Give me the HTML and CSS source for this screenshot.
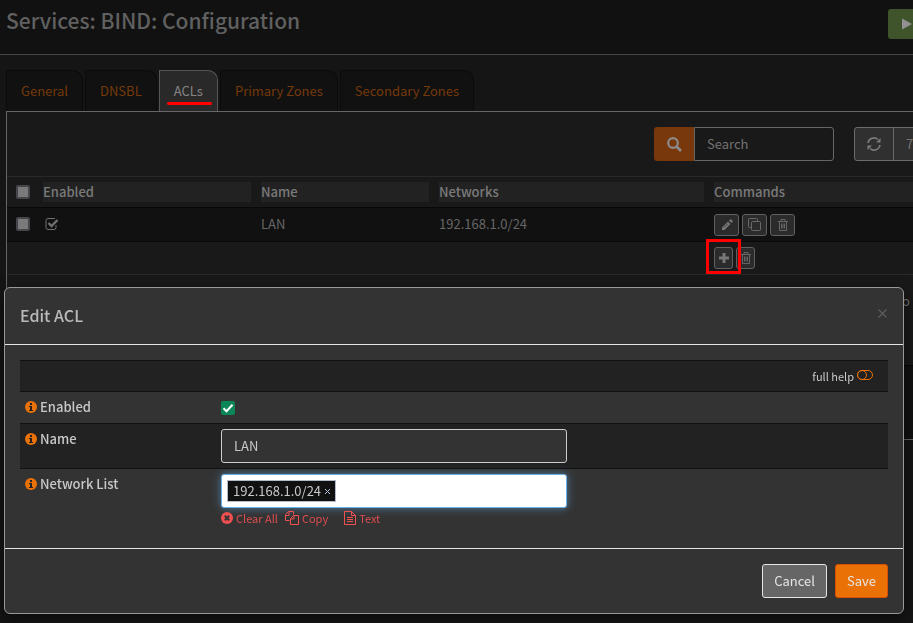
FILE: index.html
```html
<!DOCTYPE html>
<html lang="en">
<head>
<meta charset="utf-8">
<title>Services: BIND: Configuration</title>
<link rel="stylesheet" href="styles.css">
</head>
<body>
<svg class="sprite" aria-hidden="true">
  <symbol id="i-trash" viewBox="0 0 14 14"><path d="M2 3.5h10M5 3V1.5h4V3M3.500 4v8.5h7V4M5.500 5.500v5M7 5.500v5M8.500 5.500v5" fill="none" stroke="currentColor"/></symbol>
  <symbol id="i-info" viewBox="0 0 12 12"><circle cx="6" cy="6" r="6" fill="#ea7105"/><path d="M5 2h2v2H5zM4 5h3v4h1v1H4V9h1V6H4z" fill="#222"/></symbol>
</svg>

<header class="page-head">
  <h1>Services: BIND: Configuration</h1>
  <button class="run" type="button" aria-label="Start"><svg width="10" height="12" viewBox="0 0 10 12"><path d="M0 0.500 10 6 0 11.500z" fill="#929292"/></svg></button>
</header>

<main>
  <nav class="tabs">
    <a href="#general">General</a>
    <a href="#dnsbl">DNSBL</a>
    <a href="#acls" class="active">ACLs<span class="underline"></span></a>
    <a href="#primary">Primary Zones</a>
    <a href="#secondary">Secondary Zones</a>
  </nav>

  <section class="panel">
    <div class="toolbar">
      <div class="search">
        <button type="button" aria-label="Search"><svg width="15" height="15" viewBox="0 0 15 15" fill="none" stroke="#8b8b8b"><circle cx="6" cy="6" r="4.800" stroke-width="2.200"/><path d="M9.500 9.500 14 14" stroke-width="2.600"/></svg></button>
        <input type="text" placeholder="Search" aria-label="Search">
      </div>
      <div class="group">
        <button type="button" aria-label="Refresh"><svg width="14" height="14" viewBox="0 0 14 14"><path d="M1 6a6 6 0 0 1 10-3.500M13 8a6 6 0 0 1-10 3.500" fill="none" stroke="#7c7c7c" stroke-width="1.600"/><path d="M13.500 1v4.500h-4.500zM.500 13v-4.500h4.500z" fill="#7c7c7c"/></svg></button>
        <button type="button" class="count">7</button>
      </div>
    </div>

    <table class="grid">
      <colgroup><col class="c-check"><col class="c-enabled"><col class="c-name"><col class="c-net"><col></colgroup>
      <thead>
        <tr>
          <th><input type="checkbox" aria-label="Select all"></th>
          <th><span>Enabled</span></th><th><span>Name</span></th><th><span>Networks</span></th><th class="last"><span>Commands</span></th>
        </tr>
      </thead>
      <tbody>
        <tr>
          <td><input type="checkbox" aria-label="Select LAN"></td>
          <td><svg class="tick" width="14" height="12" viewBox="0 0 14 12" fill="none" stroke="#707070"><path d="M11 7v2.500a2 2 0 0 1-2 2H3a2 2 0 0 1-2-2v-7a2 2 0 0 1 2-2h7"/><path d="M3.500 5 6.500 8 12.500 2" stroke-width="2.400"/></svg></td>
          <td>LAN</td>
          <td>192.168.1.0/24</td>
          <td class="actions">
            <div class="cmds">
              <button type="button" aria-label="Edit"><svg width="12" height="12" viewBox="0 0 12 12" fill="#777"><path d="M1 8.500 7 2.500l2.500 2.500-6 6H1zM8 1.500 9 .500h1.500l1 1V3l-1 1z"/><path d="M3 8.500 7 4.500" stroke="#3a3a3a" stroke-width=".8"/></svg></button>
              <button type="button" aria-label="Clone"><svg width="13" height="13" viewBox="0 0 13 13" fill="none" stroke="#696969"><path d="M3.500 9.500h-2a1 1 0 0 1-1-1v-7a1 1 0 0 1 1-1h7a1 1 0 0 1 1 1v2"/><rect x="3.500" y="3.500" width="9" height="9" rx="1"/></svg></button>
              <button type="button" aria-label="Delete"><svg width="14" height="14"><use href="#i-trash"/></svg></button>
            </div>
          </td>
        </tr>
      </tbody>
      <tfoot>
        <tr>
          <td colspan="4"></td>
          <td>
            <div class="cmds small">
              <button type="button" aria-label="Add"><svg width="10" height="10" viewBox="0 0 10 10"><path d="M3.500 0h3v3.500H10v3H6.500V10h-3V6.500H0v-3h3.500z" fill="#777"/></svg><span class="callout"></span></button>
              <button type="button" aria-label="Delete selected"><svg width="14" height="14"><use href="#i-trash"/></svg></button>
            </div>
          </td>
        </tr>
      </tfoot>
    </table>
    <p class="summary">Showing 1 to</p>
    <div class="apply"></div>
  </section>
</main>

<form class="modal" role="dialog" aria-labelledby="dlg">
  <header>
    <h2 id="dlg">Edit ACL</h2>
    <button type="button" class="close" aria-label="Close"><svg width="9" height="9" viewBox="0 0 9 9"><path d="M.500.500l8 8M8.500.500l-8 8" stroke="#5c5c5c" stroke-width="1.300"/></svg></button>
  </header>
  <div class="body">
    <table class="fields">
      <colgroup><col class="f-label"><col class="f-input"><col></colgroup>
      <tbody>
        <tr class="help"><td colspan="3"><a href="#help">full help <svg width="16" height="10" viewBox="0 0 16 10" fill="none" stroke="#ea7105"><rect x=".500" y=".500" width="15" height="9" rx="4.500"/><circle cx="5" cy="5" r="4.500"/></svg></a></td></tr>
        <tr>
          <td><label for="enabled"><svg width="12" height="12"><use href="#i-info"/></svg>Enabled</label></td>
          <td><input id="enabled" type="checkbox" class="on" checked></td><td></td>
        </tr>
        <tr class="odd">
          <td><label for="name"><svg width="12" height="12"><use href="#i-info"/></svg>Name</label></td>
          <td><input id="name" class="text" type="text" value="LAN"></td><td></td>
        </tr>
        <tr>
          <td><label for="nets"><svg width="12" height="12"><use href="#i-info"/></svg>Network List</label></td>
          <td>
            <div class="tokens"><span class="token">192.168.1.0/24<button type="button" aria-label="Remove"><svg width="5" height="5" viewBox="0 0 5 5"><path d="M0 0l5 5M5 0 0 5" stroke="#b9c7e6"/></svg></button></span><input id="nets" type="text"></div>
            <div class="links">
              <a href="#clear"><svg width="12" height="12" viewBox="0 0 12 12"><circle cx="6" cy="6" r="6" fill="#f05050"/><path d="M3.800 3.800l4.400 4.400M8.200 3.800 3.800 8.200" stroke="#333" stroke-width="2"/></svg>Clear All</a>
              <a href="#copy"><svg width="14" height="14" viewBox="0 0 14 14" fill="none" stroke="#f05050"><path d="M4.500 9.500h-4v-6l3-3h5v3M.500 4.500h3.500V.500M5.500 13.500v-6l3-3h5v9zM5.500 8h3.500V4.500"/></svg>Copy</a>
              <a href="#text"><svg width="12" height="14" viewBox="0 0 12 14" fill="none" stroke="#f05050"><path d="M.500.500h7l4 4v9H.500zM7.500.500v4h4M3 6.500h6M3 8.500h6M3 10.500h6"/></svg>Text</a>
            </div>
          </td><td></td>
        </tr>
      </tbody>
    </table>
  </div>
  <footer>
    <button type="button" class="cancel">Cancel</button>
    <button type="button" class="save">Save</button>
  </footer>
</form>
</body>
</html>
```
FILE: styles.css
```css
* { box-sizing: border-box; }
html, body { margin: 0; min-height: 100%; }
body {
  background: #151515;
  color: #737373;
  font: 13px/20px "Noto Sans CJK SC", "Noto Sans", sans-serif;
  overflow: hidden;
}
button, input { font: inherit; color: inherit; margin: 0; }
button { display: inline-flex; align-items: center; justify-content: center; padding: 0; border: 1px solid; border-radius: 3px; }
a { text-decoration: none; color: inherit; }
svg { display: block; flex: none; }
.sprite { display: none; }

.page-head {
  display: flex;
  justify-content: space-between;
  align-items: flex-start;
  height: 55px;
  padding: 9px 0 0 6px;
  background: #111;
  border-bottom: 1px solid #444;
}
h1 { margin: 0; font-size: 21px; line-height: 22px; font-weight: 500; color: #606060; }
.run { width: 25px; height: 30px; padding-left: 12px; background: #40542b; border: 0; border-radius: 3px 0 0 3px; }

main { padding: 15px 0 0 6px; }
.tabs { display: flex; gap: 2px; }
.tabs a {
  position: relative;
  height: 41px;
  padding: 10px 14px;
  background: #111;
  color: #763909;
  border: 1px solid #0b0b0b;
  border-bottom: 0;
  border-radius: 0 10px 0 0;
}
.tabs .active { background: #292929; color: #858585; border-color: #555; }
.underline { position: absolute; left: 7px; right: 5px; bottom: 6px; height: 3px; border-radius: 2px; background: #f00; }

.panel { background: #191919; border: solid #666; border-width: 1px 0 1px 1px; }
.toolbar { display: flex; justify-content: flex-end; gap: 20px; padding: 15px 0; }
.search { display: flex; }
.search button { width: 40px; height: 34px; background: #78380b; border: 0; border-radius: 3px 0 0 3px; }
.search input {
  width: 140px; height: 34px; padding: 0 12px 2px;
  background: #191919; border: 1px solid #666; border-radius: 0 3px 3px 0; outline: 0;
}
.search input::placeholder { color: #737373; opacity: 1; }
.group { display: flex; width: 59px; }
.group button { flex: none; width: 40px; height: 34px; background: #303030; border-color: #6b6b6b; border-radius: 3px 0 0 3px; }
.group .count { width: 20px; margin-left: -1px; padding-left: 12px; border-right: 0; border-radius: 0; }

.grid { width: 100%; table-layout: fixed; border-collapse: collapse; border-top: 1px solid #292929; border-bottom: 1px solid #292929; }
.c-check { width: 31px; }
.c-enabled { width: 218px; }
.c-name { width: 178px; }
.c-net { width: 275px; }
.grid th, .grid td { padding: 5px; text-align: left; vertical-align: middle; }
.grid th { font-weight: 500; color: #7a7a7a; }
.grid th span { display: block; background: #222; }
.grid .last { padding-right: 0; }
.grid tbody tr { height: 34px; background: #111; border: solid #080808; border-width: 1px 0; }
.grid tbody td { padding-bottom: 7px; color: #666; }
.grid tbody .actions { padding-bottom: 5px; }
.grid tfoot tr { height: 33px; }
.grid input, .on { appearance: none; display: block; width: 14px; height: 14px; margin: 0; border-radius: 2px; }
.grid input { margin-left: 4px; background: #7a7a7a; border: 2px solid #45454c; }
.tick { margin-left: 2px; }
.cmds { display: flex; gap: 3px; }
.cmds button { position: relative; width: 25px; height: 22px; background: #2b2b2b; border-color: #606060; color: #666; }
.small button { width: 19px; }
.callout { position: absolute; left: -9px; top: -9px; width: 35px; height: 35px; border: 3px solid #f00; z-index: 1; }
.summary { margin: 0; padding: 16px 3px 54px; text-align: right; }
.apply { height: 74px; background: #111; border-top: 1px solid #080808; }

.modal {
  position: fixed;
  top: 287px;
  left: 4px;
  right: 9px;
  background: #333;
  color: #c8c8c8;
  border: 1px solid #999;
  border-radius: 6px;
  box-shadow: 0 5px 15px rgba(0, 0, 0, .5);
  z-index: 2;
}
.modal header { display: flex; justify-content: space-between; align-items: flex-start; padding: 15px; height: 57px; border-bottom: 1px solid #e5e5e5; }
h2 { margin: 0; font-size: 16px; line-height: 24px; font-weight: 500; color: #bbb; }
.close { width: 11px; height: 20px; background: none; border: 0; }
.body { padding: 15px; }
.fields { width: 100%; table-layout: fixed; border-collapse: collapse; }
.f-label { width: 196px; }
.f-input { width: 356px; }
.fields tr { height: 32px; border-top: 1px solid #111; }
.fields .help { height: 31px; }
.fields td { padding: 5px; vertical-align: top; }
.fields .help, .fields .odd { background: #222; }
.fields .help td { padding: 5px 15px; }
.help a { display: flex; justify-content: flex-end; gap: 3px; font-size: 11px; }
.help svg { margin-top: 4px; }
.fields label { display: flex; align-items: center; gap: 3px; font-weight: 500; }
.on { margin-top: 4px; background: #0b8658 url("data:image/svg+xml,%3Csvg xmlns='http://www.w3.org/2000/svg' viewBox='0 0 14 14'%3E%3Cpath d='M2.500 7.200 5.500 10.200 11.500 3.800' fill='none' stroke='white' stroke-width='2'/%3E%3C/svg%3E"); }
.text { display: block; width: 100%; height: 34px; padding: 0 12px 2px; background: #333; border: 1px solid #ccc; border-radius: 3px; outline: 0; }
.tokens { display: flex; align-items: center; height: 34px; padding: 0 5px; background: #fff; border: 1px solid #66afe9; border-radius: 3px; box-shadow: 0 0 8px rgba(102, 175, 233, .6); }
.token { display: flex; align-items: center; gap: 4px; height: 22px; padding: 0 5px; background: #111; border: 1px solid #b4bcca; }
.token button { background: none; border: 0; }
.tokens input { flex: 1; min-width: 0; border: 0; outline: 0; background: none; color: #222; }
.links { display: flex; font-size: 11px; color: #dc4d50; }
.links a { display: flex; align-items: center; gap: 3px; margin-right: 7px; }
.links a:nth-child(2) { margin-right: 16px; }
.modal footer { display: flex; justify-content: flex-end; gap: 8px; padding: 15px; border-top: 1px solid #e5e5e5; }
.modal footer button { height: 34px; padding: 0 11px; color: #e5e5e5; }
.modal footer .cancel { background: #666; border-color: #e5e5e5; }
.modal footer .save { background: #ea7105; border-color: #d94f00; }
```
